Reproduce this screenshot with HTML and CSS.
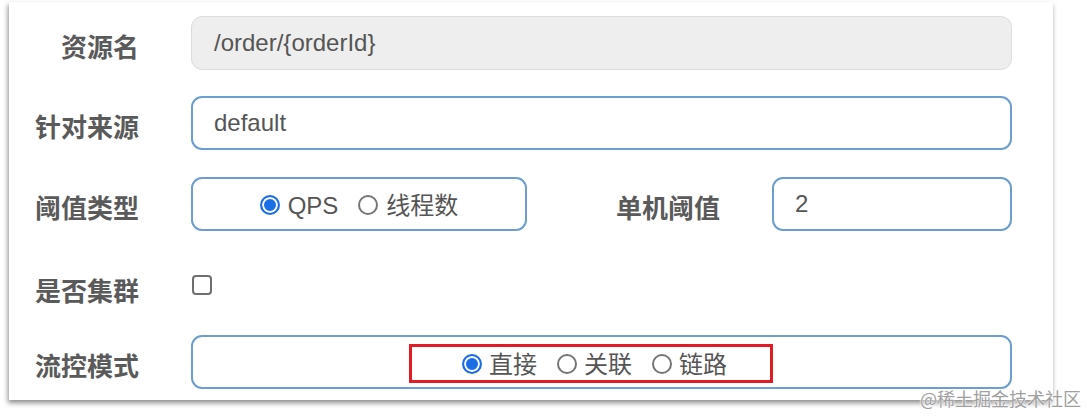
FILE: index.html
```html
<!DOCTYPE html>
<html lang="zh-CN">
<head>
<meta charset="utf-8">
<title>流控规则</title>
<link rel="stylesheet" href="styles.css">
</head>
<body>
<div class="card">
  <div class="form">
    <div class="row">
      <div class="label">资源名</div>
      <div class="field field-disabled"><span class="val">/order/{orderId}</span></div>
    </div>
    <div class="row">
      <div class="label">针对来源</div>
      <div class="field"><span class="val">default</span></div>
    </div>
    <div class="row">
      <div class="label">阈值类型</div>
      <div class="split">
        <div class="field radio-box">
          <span class="opt"><span class="radio on"></span>QPS</span>
          <span class="opt"><span class="radio"></span>线程数</span>
        </div>
        <div class="label label-inline">单机阈值</div>
        <div class="field grow"><span class="val">2</span></div>
      </div>
    </div>
    <div class="row row-check">
      <div class="label">是否集群</div>
      <div class="check-wrap"><span class="checkbox"></span></div>
    </div>
    <div class="row">
      <div class="label">流控模式</div>
      <div class="field radio-box mode-box">
        <span class="highlight">
          <span class="opt"><span class="radio on"></span>直接</span>
          <span class="opt"><span class="radio"></span>关联</span>
          <span class="opt"><span class="radio"></span>链路</span>
        </span>
      </div>
    </div>
  </div>
  <div class="watermark">@稀土掘金技术社区</div>
</div>
</body>
</html>
```

FILE: styles.css
```css
* { box-sizing: border-box; }
html, body { margin: 0; padding: 0; background: #ffffff; }
body {
  font-family: "Liberation Sans", "Noto Sans CJK SC", sans-serif;
  color: #555555;
  width: 1087px;
  height: 417px;
  overflow: hidden;
}
.card {
  position: relative;
  margin: 2px 0 0 9px;
  width: 1044px;
  height: 398px;
  background: #ffffff;
  box-shadow: -1px 3px 5px rgba(0, 0, 0, 0.45);
  padding: 14px 41px 0 24px;
}
.form {
  display: flex;
  flex-direction: column;
  gap: 26px;
}
.row {
  display: flex;
  align-items: center;
  height: 54px;
}
.row:nth-child(3) { margin-top: 1px; }
.label {
  width: 106px;
  flex: none;
  text-align: right;
  margin-right: 52px;
  font-family: "Noto Sans CJK SC", sans-serif;
  font-weight: 700;
  font-size: 26px;
  line-height: 30px;
  color: #5a5a5a;
  padding-top: 6px;
  white-space: nowrap;
}
.field {
  flex: 1;
  height: 54px;
  border: 2px solid #6c9ecf;
  border-radius: 11px;
  display: flex;
  align-items: center;
  padding-left: 21px;
  font-size: 24px;
  color: #555555;
  background: #ffffff;
}
.field-disabled {
  background: #eeeeee;
  border-color: #dddddd;
  border-width: 1px;
  padding-left: 22px;
}
.val { line-height: 28px; }
.split {
  flex: 1;
  display: flex;
  align-items: center;
}
.radio-box {
  flex: none;
  width: 336px;
  justify-content: center;
  padding-left: 0;
  padding-top: 4px;
  gap: 20px;
}
.label-inline {
  width: 106px;
  margin-left: 89px;
  margin-right: 50px;
  text-align: left;
}
.grow { flex: 1; }
.opt {
  display: inline-flex;
  align-items: center;
  gap: 8px;
  font-family: "Liberation Sans", "Noto Sans CJK SC", sans-serif;
  font-size: 24px;
  line-height: 28px;
  color: #555555;
}
.radio {
  display: inline-block;
  width: 20px;
  height: 20px;
  border-radius: 50%;
  border: 2px solid #767676;
  background: #ffffff;
  flex: none;
  margin-top: -2px;
}
.radio.on {
  border-color: #1a6fe6;
  background: #1a6fe6;
  box-shadow: inset 0 0 0 2px #ffffff;
}
.row-check {
  height: 52px;
  padding-top: 8px;
}
.check-wrap { display: flex; align-items: center; }
.checkbox {
  display: inline-block;
  width: 20px;
  height: 20px;
  margin-left: 1px;
  margin-top: -4px;
  border: 2px solid #6e6e6e;
  border-radius: 4px;
  background: #ffffff;
}
.mode-box {
  flex: 1;
  width: auto;
  padding-right: 21px;
  padding-top: 0;
  gap: 0;
}
.highlight {
  display: inline-flex;
  align-items: center;
  gap: 20px;
  border: 3px solid #e01b24;
  height: 39px;
  padding: 4px 43px 0 50px;
  margin-top: 2px;
}
.mode-box .opt { gap: 7px; }
.watermark {
  position: absolute;
  right: -28px;
  bottom: -8px;
  font-family: "Noto Sans CJK SC", sans-serif;
  font-size: 18px;
  line-height: 20px;
  color: #a0a0a0;
  white-space: nowrap;
  text-shadow: 0 0 2px #ffffff, 0 0 2px #ffffff;
}
```
